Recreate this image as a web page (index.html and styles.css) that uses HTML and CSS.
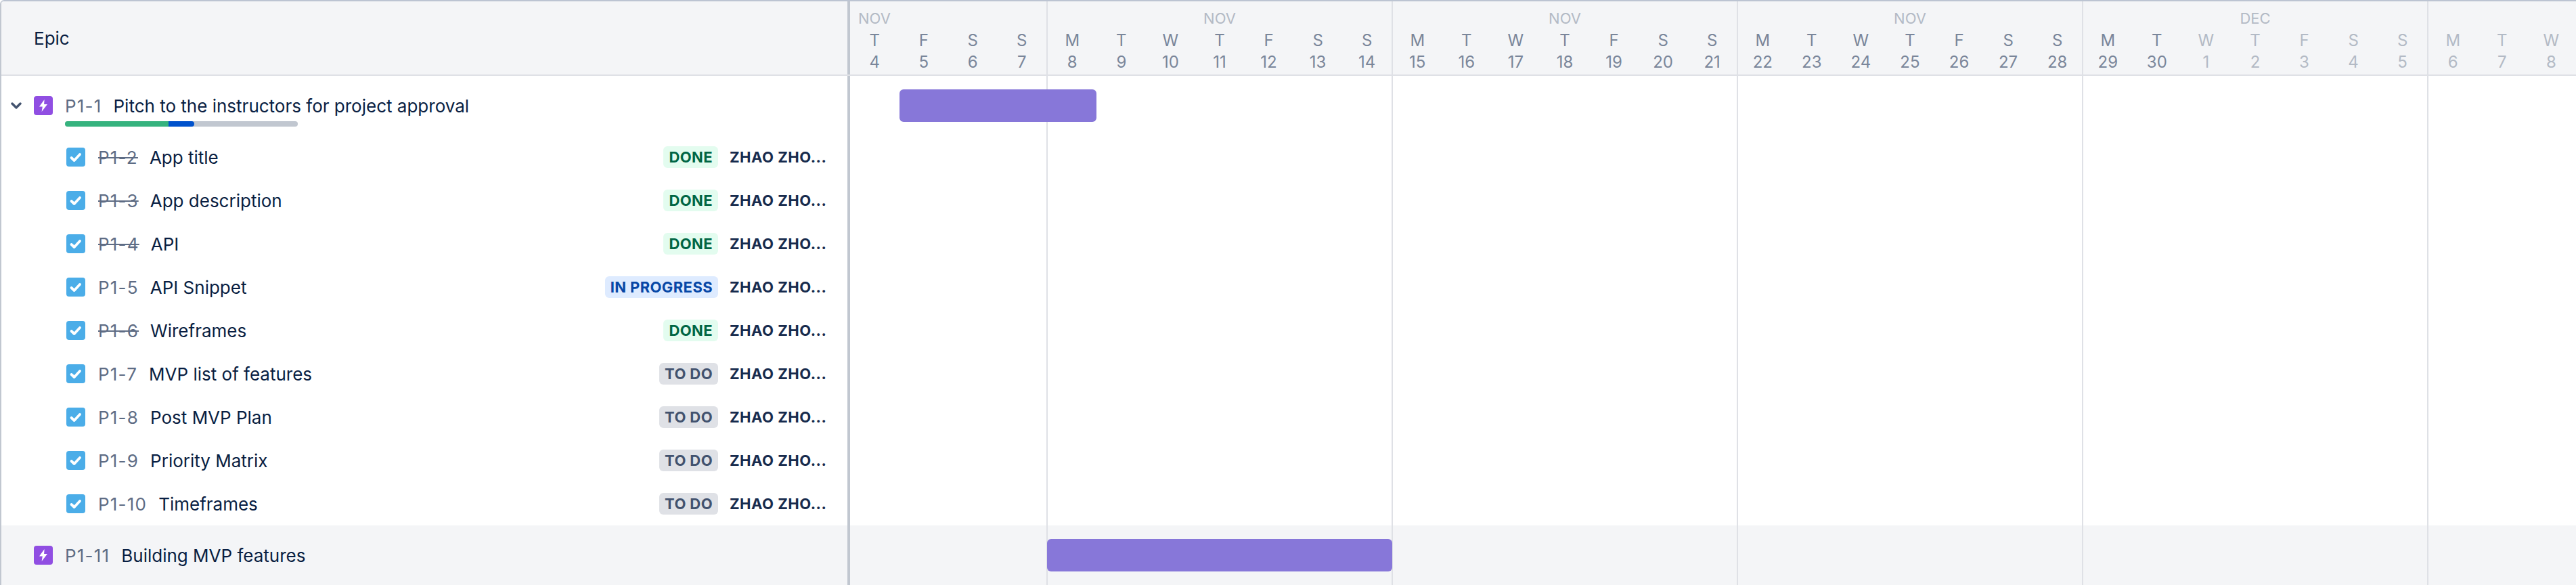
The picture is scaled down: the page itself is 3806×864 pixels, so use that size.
FILE: index.html
```html
<!DOCTYPE html>
<html lang="en">
<head>
    <meta charset="UTF-8">
    <title>Roadmap</title>
    <link rel="stylesheet" href="styles.css">
</head>
<body>
<div class="gantt">

    <div class="row head">
        <div class="side"><span class="side-title">Epic</span></div>
        <div class="weeks">
            <div class="week">
                <div class="month month-left">NOV</div>
                <div class="days">
                    <div class="day"><span>T</span><span>4</span></div>
                    <div class="day"><span>F</span><span>5</span></div>
                    <div class="day"><span>S</span><span>6</span></div>
                    <div class="day"><span>S</span><span>7</span></div>
                </div>
            </div>
            <div class="week">
                <div class="month">NOV</div>
                <div class="days">
                    <div class="day"><span>M</span><span>8</span></div>
                    <div class="day"><span>T</span><span>9</span></div>
                    <div class="day"><span>W</span><span>10</span></div>
                    <div class="day"><span>T</span><span>11</span></div>
                    <div class="day"><span>F</span><span>12</span></div>
                    <div class="day"><span>S</span><span>13</span></div>
                    <div class="day"><span>S</span><span>14</span></div>
                </div>
            </div>
            <div class="week">
                <div class="month">NOV</div>
                <div class="days">
                    <div class="day"><span>M</span><span>15</span></div>
                    <div class="day"><span>T</span><span>16</span></div>
                    <div class="day"><span>W</span><span>17</span></div>
                    <div class="day"><span>T</span><span>18</span></div>
                    <div class="day"><span>F</span><span>19</span></div>
                    <div class="day"><span>S</span><span>20</span></div>
                    <div class="day"><span>S</span><span>21</span></div>
                </div>
            </div>
            <div class="week">
                <div class="month">NOV</div>
                <div class="days">
                    <div class="day"><span>M</span><span>22</span></div>
                    <div class="day"><span>T</span><span>23</span></div>
                    <div class="day"><span>W</span><span>24</span></div>
                    <div class="day"><span>T</span><span>25</span></div>
                    <div class="day"><span>F</span><span>26</span></div>
                    <div class="day"><span>S</span><span>27</span></div>
                    <div class="day"><span>S</span><span>28</span></div>
                </div>
            </div>
            <div class="week">
                <div class="month">DEC</div>
                <div class="days">
                    <div class="day"><span>M</span><span>29</span></div>
                    <div class="day"><span>T</span><span>30</span></div>
                    <div class="day off"><span>W</span><span>1</span></div>
                    <div class="day off"><span>T</span><span>2</span></div>
                    <div class="day off"><span>F</span><span>3</span></div>
                    <div class="day off"><span>S</span><span>4</span></div>
                    <div class="day off"><span>S</span><span>5</span></div>
                </div>
            </div>
            <div class="week">
                <div class="month"></div>
                <div class="days">
                    <div class="day off"><span>M</span><span>6</span></div>
                    <div class="day off"><span>T</span><span>7</span></div>
                    <div class="day off"><span>W</span><span>8</span></div>
                </div>
            </div>
        </div>
    </div>

    <div class="body">
        <!-- week lines run behind the bars -->
        <div class="week-lines">
            <div class="week-line"></div>
            <div class="week-line"></div>
            <div class="week-line"></div>
            <div class="week-line"></div>
            <div class="week-line"></div>
        </div>

        <div class="row epic">
            <div class="side">
                <svg class="chevron" viewBox="0 0 16 10"><path d="M2 2l6 6 6-6" fill="none" stroke="#42526e" stroke-width="3.4" stroke-linecap="round" stroke-linejoin="round"/></svg>
                <svg class="icon" viewBox="0 0 28 28"><rect width="28" height="28" rx="4" fill="#904ee2"/><path d="M15.6 5 8 15.6h4.8L11.6 23 20 12h-4.9z" fill="#fff"/></svg>
                <div class="epic-text">
                    <div class="summary"><span class="key">P1-1</span><span class="title">Pitch to the instructors for project approval</span></div>
                    <div class="progress">
                        <div class="progress-done"></div>
                        <div class="progress-doing"></div>
                    </div>
                </div>
            </div>
            <div class="track"><div class="bar bar-one"></div></div>
        </div>

        <div class="row task">
            <div class="side">
                <svg class="icon" viewBox="0 0 28 28"><rect width="28" height="28" rx="4" fill="#4bade8"/><path d="M7.5 15l4.2 4 8.3-9" fill="none" stroke="#fff" stroke-width="3.8" stroke-linecap="round" stroke-linejoin="round"/></svg>
                <span class="key struck">P1-2</span><span class="title">App title</span>
                <span class="status done">DONE</span><span class="assignee">ZHAO ZHO...</span>
            </div>
            <div class="track"></div>
        </div>
        <div class="row task">
            <div class="side">
                <svg class="icon" viewBox="0 0 28 28"><rect width="28" height="28" rx="4" fill="#4bade8"/><path d="M7.5 15l4.2 4 8.3-9" fill="none" stroke="#fff" stroke-width="3.8" stroke-linecap="round" stroke-linejoin="round"/></svg>
                <span class="key struck">P1-3</span><span class="title">App description</span>
                <span class="status done">DONE</span><span class="assignee">ZHAO ZHO...</span>
            </div>
            <div class="track"></div>
        </div>
        <div class="row task">
            <div class="side">
                <svg class="icon" viewBox="0 0 28 28"><rect width="28" height="28" rx="4" fill="#4bade8"/><path d="M7.5 15l4.2 4 8.3-9" fill="none" stroke="#fff" stroke-width="3.8" stroke-linecap="round" stroke-linejoin="round"/></svg>
                <span class="key struck">P1-4</span><span class="title">API</span>
                <span class="status done">DONE</span><span class="assignee">ZHAO ZHO...</span>
            </div>
            <div class="track"></div>
        </div>
        <div class="row task">
            <div class="side">
                <svg class="icon" viewBox="0 0 28 28"><rect width="28" height="28" rx="4" fill="#4bade8"/><path d="M7.5 15l4.2 4 8.3-9" fill="none" stroke="#fff" stroke-width="3.8" stroke-linecap="round" stroke-linejoin="round"/></svg>
                <span class="key">P1-5</span><span class="title">API Snippet</span>
                <span class="status doing">IN PROGRESS</span><span class="assignee">ZHAO ZHO...</span>
            </div>
            <div class="track"></div>
        </div>
        <div class="row task">
            <div class="side">
                <svg class="icon" viewBox="0 0 28 28"><rect width="28" height="28" rx="4" fill="#4bade8"/><path d="M7.5 15l4.2 4 8.3-9" fill="none" stroke="#fff" stroke-width="3.8" stroke-linecap="round" stroke-linejoin="round"/></svg>
                <span class="key struck">P1-6</span><span class="title">Wireframes</span>
                <span class="status done">DONE</span><span class="assignee">ZHAO ZHO...</span>
            </div>
            <div class="track"></div>
        </div>
        <div class="row task">
            <div class="side">
                <svg class="icon" viewBox="0 0 28 28"><rect width="28" height="28" rx="4" fill="#4bade8"/><path d="M7.5 15l4.2 4 8.3-9" fill="none" stroke="#fff" stroke-width="3.8" stroke-linecap="round" stroke-linejoin="round"/></svg>
                <span class="key">P1-7</span><span class="title">MVP list of features</span>
                <span class="status todo">TO DO</span><span class="assignee">ZHAO ZHO...</span>
            </div>
            <div class="track"></div>
        </div>
        <div class="row task">
            <div class="side">
                <svg class="icon" viewBox="0 0 28 28"><rect width="28" height="28" rx="4" fill="#4bade8"/><path d="M7.5 15l4.2 4 8.3-9" fill="none" stroke="#fff" stroke-width="3.8" stroke-linecap="round" stroke-linejoin="round"/></svg>
                <span class="key">P1-8</span><span class="title">Post MVP Plan</span>
                <span class="status todo">TO DO</span><span class="assignee">ZHAO ZHO...</span>
            </div>
            <div class="track"></div>
        </div>
        <div class="row task">
            <div class="side">
                <svg class="icon" viewBox="0 0 28 28"><rect width="28" height="28" rx="4" fill="#4bade8"/><path d="M7.5 15l4.2 4 8.3-9" fill="none" stroke="#fff" stroke-width="3.8" stroke-linecap="round" stroke-linejoin="round"/></svg>
                <span class="key">P1-9</span><span class="title">Priority Matrix</span>
                <span class="status todo">TO DO</span><span class="assignee">ZHAO ZHO...</span>
            </div>
            <div class="track"></div>
        </div>
        <div class="row task">
            <div class="side">
                <svg class="icon" viewBox="0 0 28 28"><rect width="28" height="28" rx="4" fill="#4bade8"/><path d="M7.5 15l4.2 4 8.3-9" fill="none" stroke="#fff" stroke-width="3.8" stroke-linecap="round" stroke-linejoin="round"/></svg>
                <span class="key">P1-10</span><span class="title">Timeframes</span>
                <span class="status todo">TO DO</span><span class="assignee">ZHAO ZHO...</span>
            </div>
            <div class="track"></div>
        </div>

        <div class="row epic epic-shaded">
            <div class="side">
                <svg class="icon" viewBox="0 0 28 28"><rect width="28" height="28" rx="4" fill="#904ee2"/><path d="M15.6 5 8 15.6h4.8L11.6 23 20 12h-4.9z" fill="#fff"/></svg>
                <div class="summary"><span class="key">P1-11</span><span class="title">Building MVP features</span></div>
            </div>
            <div class="track"><div class="bar bar-two"></div></div>
        </div>
    </div>

</div>
</body>
</html>
```

FILE: styles.css
```css
* {
    box-sizing: border-box;
}
body {
    margin: 0;
    font-family: Inter, Arial, sans-serif;
    font-size: 26px;
    color: #091e42;
    background: #ffffff;
}
.gantt {
    height: 864px;
    overflow: hidden;
    border-top: 2px solid #bcc4d2;
    border-left: 2px solid #c1c7d0;
    border-top-left-radius: 6px;
}
.row {
    display: flex;
}
.side {
    flex: 0 0 1254px;
    display: flex;
    align-items: center;
    border-right: 4px solid #c1c7d0;
}

/* header */
.head {
    height: 110px;
    background: #f4f5f7;
    border-bottom: 2px solid #dfe1e6;
}
.side-title {
    margin-left: 48px;
}
.weeks {
    display: grid;
    grid-template-columns: 290px repeat(5, 510px);
    flex: none;
}
.week {
    border-left: 2px solid #dfe1e6;
    padding-top: 8px;
}
.week:first-child {
    border-left: none;
}
.month {
    height: 34px;
    line-height: 34px;
    font-size: 22px;
    text-align: center;
    color: #b3bac5;
}
.month-left {
    text-align: left;
    padding-left: 12px;
}
.days {
    display: flex;
}
.day {
    flex: 0 0 72.57px;
    display: flex;
    flex-direction: column;
    align-items: center;
    font-size: 24px;
    line-height: 32px;
    color: #7a869a;
}
.week:first-child .day {
    flex-basis: 72.5px;
}
.off {
    color: #b3bac5;
}

/* body */
.body {
    position: relative;
}
.week-lines {
    position: absolute;
    top: 0;
    bottom: 0;
    left: 1544px;
    display: flex;
}
.week-line {
    width: 510px;
    border-left: 2px solid #dfe1e6;
}
.key {
    color: #5e6c84;
    letter-spacing: 1.2px;
    margin-right: 17px;
}
.summary {
    white-space: nowrap;
}
.struck {
    text-decoration: line-through;
}
.epic {
    height: 88px;
}
.epic .side {
    padding-left: 48px;
    position: relative;
}
.epic-shaded {
    background: #f4f5f7;
}
.chevron {
    position: absolute;
    left: 14px;
    top: 39px;
    width: 16px;
    height: 10px;
}
.icon {
    width: 28px;
    height: 28px;
    flex: none;
}
.epic .icon {
    margin-right: 18px;
}
.epic-text {
    position: relative;
}
.progress {
    position: absolute;
    left: 0;
    top: 38px;
    display: flex;
    width: 344px;
    height: 8px;
    border-radius: 4px;
    background: #c1c7d0;
}
.progress-done {
    width: 153px;
    background: #36b37e;
    border-radius: 4px 0 0 4px;
}
.progress-doing {
    width: 38px;
    background: #0052cc;
    border-radius: 0 4px 4px 0;
}
.task {
    height: 64px;
}
.task .side {
    padding-left: 96px;
}
.task .icon {
    margin-right: 19px;
}
.status {
    margin-left: auto;
    height: 32px;
    line-height: 32px;
    padding: 0 8px;
    border-radius: 6px;
    font-size: 22px;
    font-weight: 700;
    letter-spacing: 0.4px;
}
.done {
    background: #e3fcef;
    color: #006644;
}
.doing {
    background: #deebff;
    color: #0747a6;
}
.todo {
    background: #dfe1e6;
    color: #42526e;
}
.assignee {
    flex: 0 0 174px;
    margin-left: 17px;
    font-size: 22px;
    font-weight: 700;
    letter-spacing: 0.5px;
    color: #172b4d;
    white-space: nowrap;
}
.track {
    flex: none;
    width: 2768px;
    display: grid;
    grid-template-columns: repeat(38, 72.857px);
    align-items: center;
}
.bar {
    position: relative;
    height: 48px;
    background: #8777d9;
    border-radius: 6px;
}
.bar-one {
    grid-column: 2 / 6;
}
.bar-two {
    grid-column: 5 / 12;
}
```
